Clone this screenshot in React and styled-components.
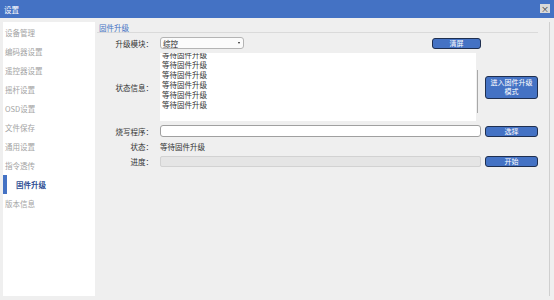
import styled, { createGlobalStyle } from 'styled-components';

const GlobalStyle = createGlobalStyle`
  html, body {
    margin: 0;
    padding: 0;
    background: #efefef;
  }
  body {
    font-family: "Noto Sans CJK SC", "Noto Sans", sans-serif;
  }
`;

const Window = styled.div`
  width: 554px;
  height: 300px;
  display: flex;
  flex-direction: column;
  background: #efefef;
  overflow: hidden;
`;

const TitleBar = styled.div`
  height: 18px;
  flex: none;
  display: flex;
  align-items: center;
  justify-content: space-between;
  padding: 0 4px 0 4px;
  background: #4472c4;
  color: #fff;
  font-size: 7.5px;
`;

const CloseBox = styled.div`
  width: 10px;
  height: 9px;
  margin-top: -1px;
  display: flex;
  align-items: center;
  justify-content: center;
  background: #d9d9d9;
  color: #333;
  font-size: 8px;
  line-height: 1;
`;

const Body = styled.div`
  flex: 1;
  display: flex;
  padding: 4px 0 4px 3px;
  gap: 2px;
  min-height: 0;
`;

const Sidebar = styled.div`
  width: 92px;
  background: #fff;
  padding-top: 1px;
  display: flex;
  flex-direction: column;
`;

const NavItem = styled.div`
  height: 19px;
  display: flex;
  align-items: center;
  padding-left: ${(p) => (p.$active ? '9px' : '2px')};
  border-left: ${(p) => (p.$active ? '4px solid #4472c4' : '0')};
  font-size: 7.5px;
  color: ${(p) => (p.$active ? '#2f4f94' : '#a3a3a3')};
  font-weight: ${(p) => (p.$active ? 700 : 400)};
`;

const Content = styled.div`
  flex: 1;
  border-right: 1px solid #cfcfcf;
  margin-right: 4px;
  padding-right: 11px;
`;

const Heading = styled.div`
  height: 10px;
  display: flex;
  align-items: center;
  padding-left: 2px;
  font-size: 7.5px;
  color: #4472c4;
  border-bottom: 1px solid #dadada;
  margin-top: -2px;
  padding-top: 2px;
`;

const Form = styled.div`
  display: grid;
  grid-template-columns: 59px 321px 53px;
  grid-template-rows: 12px 68px 12px 11px 11px;
  column-gap: 4px;
  row-gap: 4px;
  margin-top: 4px;
`;

const Label = styled.div`
  display: flex;
  align-items: center;
  justify-content: flex-end;
  padding-right: 3px;
  font-size: 7.5px;
  color: #333;
`;

const Cell = styled.div`
  display: flex;
  align-items: center;
  justify-content: ${(p) => p.$justify || 'flex-start'};
  min-width: 0;
`;

const Select = styled.div`
  width: 84px;
  height: 12px;
  box-sizing: border-box;
  display: flex;
  align-items: center;
  justify-content: space-between;
  padding: 0 3px 0 2px;
  border: 1px solid #b4b4b4;
  border-radius: 3px;
  background: #fbfbfb;
  font-size: 7.5px;
  color: #222;
`;

const Caret = styled.span`
  width: 0;
  height: 0;
  border-left: 1.5px solid transparent;
  border-right: 1.5px solid transparent;
  border-top: 2px solid #222;
`;

const Button = styled.div`
  width: ${(p) => p.$width || '53px'};
  height: ${(p) => p.$height || '11px'};
  box-sizing: border-box;
  display: flex;
  align-items: center;
  justify-content: center;
  text-align: center;
  background: #4472c4;
  border: 1px solid #1f2f4f;
  border-radius: 3px;
  color: #fff;
  font-size: 7px;
  line-height: 9px;
`;

const LogBox = styled.div`
  display: flex;
  height: 100%;
  width: 100%;
`;

const LogArea = styled.div`
  flex: 1;
  background: #fff;
  overflow: hidden;
  padding-left: 2px;
`;

const LogLines = styled.div`
  margin-top: -3px;
`;

const LogLine = styled.div`
  height: 10px;
  line-height: 10px;
  font-size: 7.5px;
  color: #333;
`;

const ScrollTrack = styled.div`
  width: 5px;
  position: relative;
`;

const ScrollThumb = styled.div`
  position: absolute;
  left: 1px;
  top: 17px;
  width: 1px;
  height: 43px;
  background: #a8a8a8;
`;

const TextInput = styled.div`
  width: 100%;
  height: 12px;
  box-sizing: border-box;
  border: 1px solid #a0a0a0;
  border-radius: 3px;
  background: #fff;
`;

const StatusText = styled.div`
  font-size: 7.5px;
  color: #333;
`;

const Progress = styled.div`
  width: 100%;
  height: 11px;
  box-sizing: border-box;
  border: 1px solid #d2d2d2;
  border-radius: 2px;
  background: #e5e5e5;
`;

const navItems = [
  '设备管理',
  '编码器设置',
  '遥控器设置',
  '摇杆设置',
  'OSD设置',
  '文件保存',
  '通用设置',
  '指令透传',
  '固件升级',
  '版本信息',
];

const App = () => {
  const logs = Array.from({ length: 6 }, () => '等待固件升级');

  return (
    <>
      <GlobalStyle />
      <Window>
        <TitleBar>
          <span>设置</span>
          <CloseBox>×</CloseBox>
        </TitleBar>
        <Body>
          <Sidebar>
            {navItems.map((item) => (
              <NavItem key={item} $active={item === '固件升级'}>
                {item}
              </NavItem>
            ))}
          </Sidebar>
          <Content>
            <Heading>固件升级</Heading>
            <Form>
              <Label>升级模块：</Label>
              <Cell $justify="space-between">
                <Select>
                  <span>综控</span>
                  <Caret />
                </Select>
                <Button $width="49px">清屏</Button>
              </Cell>
              <div />

              <Label>状态信息：</Label>
              <Cell>
                <LogBox>
                  <LogArea>
                    <LogLines>
                      {logs.map((line, i) => (
                        <LogLine key={i}>{line}</LogLine>
                      ))}
                    </LogLines>
                  </LogArea>
                  <ScrollTrack>
                    <ScrollThumb />
                  </ScrollTrack>
                </LogBox>
              </Cell>
              <Cell>
                <Button $height="23px">
                  进入固件升级
                  <br />
                  模式
                </Button>
              </Cell>

              <Label>烧写程序：</Label>
              <Cell>
                <TextInput />
              </Cell>
              <Cell>
                <Button>选择</Button>
              </Cell>

              <Label>状态：</Label>
              <Cell>
                <StatusText>等待固件升级</StatusText>
              </Cell>
              <div />

              <Label>进度：</Label>
              <Cell>
                <Progress />
              </Cell>
              <Cell>
                <Button>开始</Button>
              </Cell>
            </Form>
          </Content>
        </Body>
      </Window>
    </>
  );
};

export default App;
